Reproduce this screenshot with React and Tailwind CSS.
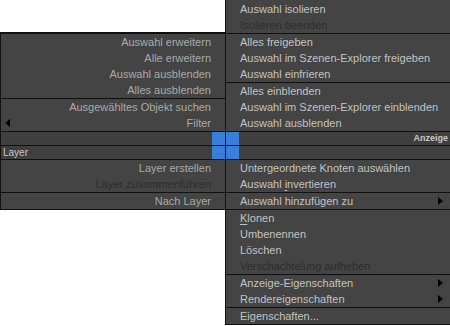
const FONT = { fontFamily: '"Liberation Sans", Arial, sans-serif' }

const leftTop = ['Auswahl erweitern', 'Alle erweitern', 'Auswahl ausblenden', 'Alles ausblenden']

function Sep() {
  return <div className="h-px bg-[#111]" />
}

function LeftRow({ children, disabled, arrow }) {
  return (
    <div className={`h-[16px] leading-[16px] flex items-center pr-[14px] ${disabled ? 'text-[#2e2e2e]' : 'text-[#a9a9a9]'}`}>
      {arrow && (
        <svg width="5" height="8" viewBox="0 0 5 8" className="ml-[4px]">
          <path d="M5 0 L0 4 L5 8 Z" fill="#000" />
        </svg>
      )}
      <span className="ml-auto whitespace-nowrap">{children}</span>
    </div>
  )
}

function RightRow({ children, disabled, arrow }) {
  return (
    <div className={`h-[16px] leading-[16px] flex items-center pl-[14px] ${disabled ? 'text-[#2e2e2e]' : 'text-[#c2c2c2]'}`}>
      <span className="whitespace-nowrap">{children}</span>
      {arrow && (
        <svg width="5" height="8" viewBox="0 0 5 8" className="ml-auto mr-[7px]">
          <path d="M0 0 L5 4 L0 8 Z" fill="#000" />
        </svg>
      )}
    </div>
  )
}

export default function App() {
  return (
    <div className="w-[450px] h-[326px] bg-white flex items-start text-[11px]" style={FONT}>
      {/* left quad */}
      <div className="w-[225px] mt-[32px] bg-[#444] border-l border-t-2 border-b border-[#111]">
        {leftTop.map((t) => (
          <LeftRow key={t}>{t}</LeftRow>
        ))}
        <Sep />
        <LeftRow>Ausgewähltes Objekt suchen</LeftRow>
        <LeftRow arrow>Filter</LeftRow>
        <Sep />
        <div className="h-[13px] flex">
          <div className="flex-1 bg-[#3f3f3f]" />
          <div className="w-[13px] bg-[#3a7edc]" />
        </div>
        <Sep />
        <div className="h-[13px] flex">
          <div className="flex-1 bg-[#3f3f3f] pl-[2px] text-[10px] leading-[13px] text-[#c8c8c8]">Layer</div>
          <div className="w-[13px] bg-[#3a7edc]" />
        </div>
        <Sep />
        <LeftRow>Layer erstellen</LeftRow>
        <LeftRow disabled>Layer zusammenführen</LeftRow>
        <Sep />
        <LeftRow>Nach Layer</LeftRow>
      </div>

      {/* right quad */}
      <div className="w-[225px] bg-[#444] pt-px border-l border-b border-[#111]">
        <RightRow>Auswahl isolieren</RightRow>
        <RightRow disabled>Isolieren beenden</RightRow>
        <Sep />
        <RightRow>Alles freigeben</RightRow>
        <RightRow>Auswahl im Szenen-Explorer freigeben</RightRow>
        <RightRow>Auswahl einfrieren</RightRow>
        <Sep />
        <RightRow>Alles einblenden</RightRow>
        <RightRow>Auswahl im Szenen-Explorer einblenden</RightRow>
        <RightRow>Auswahl ausblenden</RightRow>
        <Sep />
        <div className="h-[13px] flex">
          <div className="w-[13px] bg-[#3a7edc]" />
          <div className="flex-1 bg-[#3f3f3f] pr-[2px] text-right text-[9px] font-bold leading-[13px] text-[#c8c8c8]">Anzeige</div>
        </div>
        <Sep />
        <div className="h-[13px] flex">
          <div className="w-[13px] bg-[#3a7edc]" />
          <div className="flex-1 bg-[#3f3f3f]" />
        </div>
        <Sep />
        <RightRow>Untergeordnete Knoten auswählen</RightRow>
        <RightRow>
          Auswahl <span className="underline underline-offset-2">i</span>nvertieren
        </RightRow>
        <Sep />
        <RightRow arrow>Auswahl hinzufügen zu</RightRow>
        <Sep />
        <RightRow>
          <span className="underline underline-offset-2">K</span>lonen
        </RightRow>
        <RightRow>Umbenennen</RightRow>
        <RightRow>Löschen</RightRow>
        <RightRow disabled>Verschachtelung aufheben</RightRow>
        <Sep />
        <RightRow arrow>Anzeige-Eigenschaften</RightRow>
        <RightRow arrow>Rendereigenschaften</RightRow>
        <Sep />
        <RightRow>Eigenschaften...</RightRow>
      </div>
    </div>
  )
}
